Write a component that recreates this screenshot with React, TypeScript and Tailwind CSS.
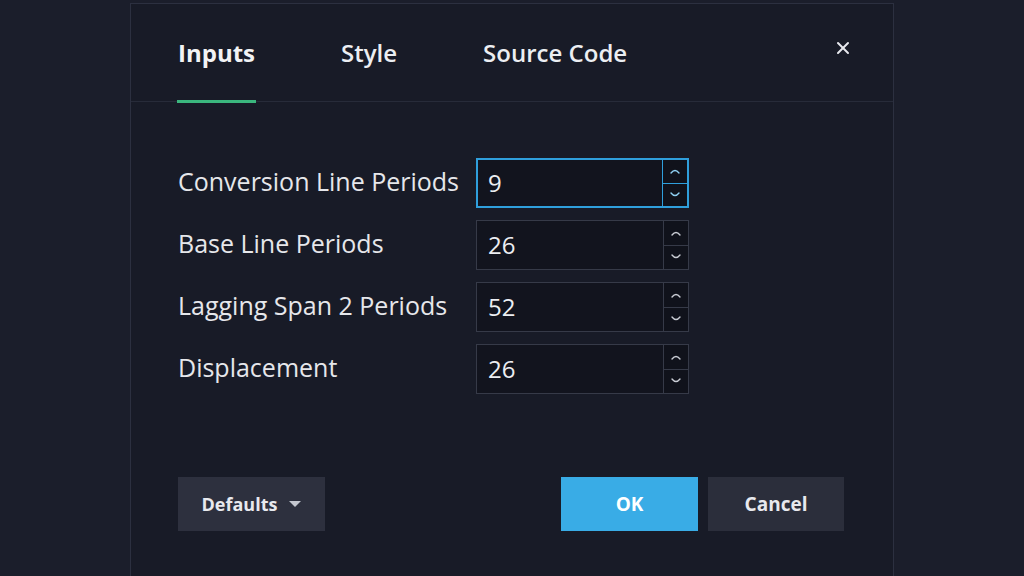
import { X } from "lucide-react";

const rows = [
  { label: "Conversion Line Periods", value: "9", focused: true },
  { label: "Base Line Periods", value: "26" },
  { label: "Lagging Span 2 Periods", value: "52" },
  { label: "Displacement", value: "26" },
];

function Spinner({ focused }: { focused?: boolean }) {
  const border = focused ? "border-[#2f9fdc]" : "border-[#363a48]";
  const color = focused ? "text-[#8fd0f2]" : "text-[#c9ccd4]";
  return (
    <div className={`flex w-[25px] shrink-0 flex-col border-l ${border}`}>
      <div className={`flex flex-1 items-center justify-center border-b bg-[#10121b] ${border} ${color}`}>
        <svg width="12" height="8" viewBox="0 0 12 8" fill="none" stroke="currentColor" strokeWidth="1.4" strokeLinecap="round">
          <path d="M2 6 Q6 1 10 6" />
        </svg>
      </div>
      <div className={`flex flex-1 items-center justify-center bg-[#10121b] ${color}`}>
        <svg width="12" height="8" viewBox="0 0 12 8" fill="none" stroke="currentColor" strokeWidth="1.4" strokeLinecap="round">
          <path d="M2 2 Q6 7 10 2" />
        </svg>
      </div>
    </div>
  );
}

export default function App() {
  return (
    <div
      className="flex h-[576px] w-[1024px] overflow-hidden bg-[#1b1e2b] pl-[130px] pt-[3px]"
      style={{ fontFamily: '"Open Sans", "Noto Sans", sans-serif' }}
    >
      <div className="flex h-[600px] w-[764px] flex-col border-x border-t border-[#2c3040] bg-[#181b27]">
        {/* Tabs */}
        <div className="relative flex h-[98px] items-center border-b border-[#272b39] pl-[47px] pr-[40px]">
          <div className="relative flex h-full items-center text-[24px] font-bold text-[#f2f3f5]">
            Inputs
            <span className="absolute bottom-[-2px] left-[-1px] right-[-1px] h-[3px] bg-[#3bb77e]" />
          </div>
          <div className="ml-[86px] text-[24px] font-semibold text-[#eceef2]">Style</div>
          <div className="ml-[86px] text-[24px] font-semibold text-[#eceef2]">Source Code</div>
          <button className="ml-auto mb-[10px] text-[#e8e9ee]">
            <X size={20} strokeWidth={2.4} />
          </button>
        </div>

        {/* Inputs */}
        <div className="mt-[56px] flex flex-col gap-[12px] pl-[47px]">
          {rows.map((r) => (
            <div key={r.label} className="flex items-center">
              <div className="w-[298px] pb-[3px] text-[25px] text-[#e6e7eb]">{r.label}</div>
              <div
                className={`flex h-[50px] w-[213px] bg-[#12141e] ${
                  r.focused ? "border-2 border-[#2f9fdc]" : "border border-[#363a48]"
                }`}
              >
                <div className={`flex flex-1 items-center text-[24px] text-[#eceef2] ${r.focused ? "pl-[10px]" : "pl-[11px]"}`}>
                  {r.value}
                </div>
                <Spinner focused={r.focused} />
              </div>
            </div>
          ))}
        </div>

        {/* Footer */}
        <div className="mt-[83px] flex pl-[47px]">
          <button className="flex h-[54px] w-[147px] items-center justify-center gap-[12px] bg-[#2d303e] text-[18px] font-bold text-[#e8e9ee]">
            Defaults
            <svg width="12" height="7" viewBox="0 0 12 7" fill="#c4c7d0">
              <path d="M0 0 H12 L6 6 Z" />
            </svg>
          </button>
          <button className="ml-[236px] flex h-[54px] w-[137px] items-center justify-center bg-[#39ace6] text-[19px] font-bold text-white">
            OK
          </button>
          <button className="ml-[10px] flex h-[54px] w-[136px] items-center justify-center bg-[#2b2e3b] text-[19px] font-bold text-[#e8e9ee]">
            Cancel
          </button>
        </div>
      </div>
    </div>
  );
}
